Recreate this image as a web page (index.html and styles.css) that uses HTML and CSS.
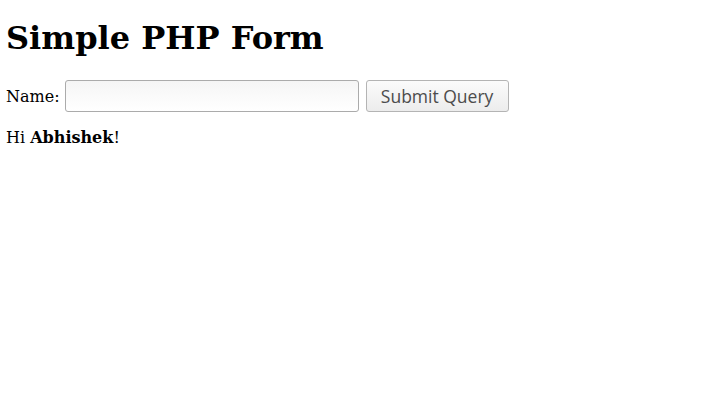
FILE: index.html
```html
<!DOCTYPE html>
<html>
<head>
<meta charset="utf-8">
<link rel="stylesheet" href="styles.css">
</head>
<body>
<h1 class="title">Simple PHP Form</h1>
<form class="form">
  <label class="label">Name:</label>
  <input class="field" type="text" name="name">
  <button class="btn" type="submit">Submit Query</button>
</form>
<p class="greet">Hi <b>Abhishek</b>!</p>
</body>
</html>
```
FILE: styles.css
```css
body {
  margin: 6px;
  font-family: "DejaVu Serif", serif;
  font-size: 16px;
  color: #000;
  background: #fff;
}
.title {
  font-size: 32px;
  font-weight: bold;
  margin: 14px 0 23px;
  line-height: 37px;
}
.form {
  display: flex;
  align-items: center;
  margin: 0;
}
.label {
  margin-right: 5px;
}
.field {
  width: 294px;
  height: 32px;
  box-sizing: border-box;
  border: 1px solid #ababab;
  border-radius: 3px;
  background: linear-gradient(#f5f5f5, #fff);
  margin: 0 7px 0 0;
}
.btn {
  width: 143px;
  height: 32px;
  box-sizing: border-box;
  border: 1px solid #b4b4b4;
  border-radius: 3px;
  background: linear-gradient(#fbfbfb, #ececec);
  font-family: "Open Sans", sans-serif;
  font-size: 17.5px;
  color: #4c4c4c;
  padding: 0;
}
.greet {
  margin: 16px 0;
}
```
